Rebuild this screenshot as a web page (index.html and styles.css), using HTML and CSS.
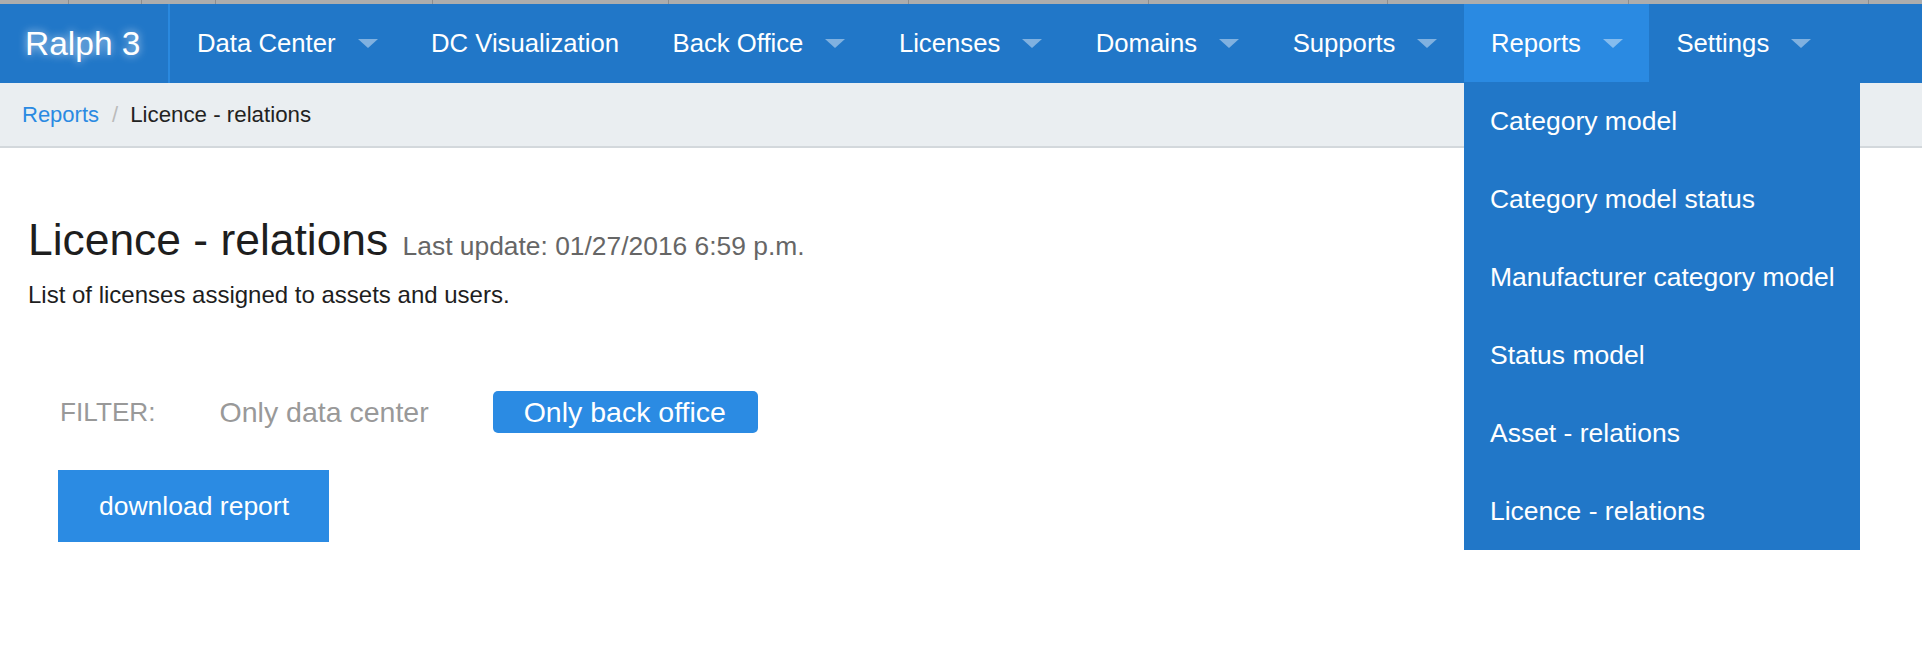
FILE: index.html
```html
<!DOCTYPE html>
<html lang="en">
<head>
<meta charset="utf-8">
<title>Licence - relations</title>
<link rel="stylesheet" href="styles.css">
</head>
<body>
<div class="chrome">
  <span></span><span></span><span></span><span></span><span></span><span></span><span></span><span></span><span></span><span></span><span></span>
</div>
<nav class="topbar">
  <a class="brand" href="#">Ralph 3</a>
  <ul class="menu">
    <li class="item"><a href="#">Data Center</a><i class="caret"></i></li>
    <li class="item"><a href="#">DC Visualization</a></li>
    <li class="item"><a href="#">Back Office</a><i class="caret"></i></li>
    <li class="item"><a href="#">Licenses</a><i class="caret"></i></li>
    <li class="item"><a href="#">Domains</a><i class="caret"></i></li>
    <li class="item"><a href="#">Supports</a><i class="caret"></i></li>
    <li class="item active"><a href="#">Reports</a><i class="caret"></i>
      <ul class="dropdown">
        <li><a href="#">Category model</a></li>
        <li><a href="#">Category model status</a></li>
        <li><a href="#">Manufacturer category model</a></li>
        <li><a href="#">Status model</a></li>
        <li><a href="#">Asset - relations</a></li>
        <li><a href="#">Licence - relations</a></li>
      </ul>
    </li>
    <li class="item"><a href="#">Settings</a><i class="caret"></i></li>
  </ul>
</nav>
<div class="breadcrumbs">
  <a href="#">Reports</a><span class="sep">/</span><span class="current">Licence - relations</span>
</div>
<main class="content">
  <h1 class="title">Licence - relations <small>Last update: 01/27/2016 6:59 p.m.</small></h1>
  <p class="desc">List of licenses assigned to assets and users.</p>
  <div class="filter">
    <span class="filter-label">FILTER:</span>
    <a class="filter-opt" href="#">Only data center</a>
    <a class="filter-opt selected" href="#">Only back office</a>
  </div>
  <a class="download" href="#">download report</a>
</main>
</body>
</html>
```
FILE: styles.css
```css
* { box-sizing: border-box; }
html, body { margin: 0; padding: 0; background: #fff; }
html, body { min-height: 100vh; }
body { font-family: "Liberation Sans", Arial, sans-serif; color: #222; }
a { text-decoration: none; }
ul { list-style: none; margin: 0; padding: 0; }

.chrome {
  display: grid;
  grid-template-columns: 69px 73px 74px 217px 236px 240px 240px 239px 241px 240px 1fr;
  height: 4px;
  background: #adadad;
}
.chrome span { border-right: 1px solid #8e8e8e; }
.chrome span:last-child { border-right: 0; }

.topbar {
  display: flex;
  height: 79px;
  background: #2177c8;
}
.brand {
  display: flex;
  align-items: center;
  padding: 0 25px 0 25px;
  width: 170px;
  border-right: 2px solid #2a89df;
  color: #fff;
  font-size: 33.5px;
  text-shadow: 0 0 8px rgba(255,255,255,0.75);
}
.menu { display: flex; }
.item {
  position: relative;
  display: flex;
  align-items: center;
  padding: 0 26.5px 0 27px;
}
.item > a { color: #fff; font-size: 25.7px; }
.item.active { background: #2a8ae2; height: 78px; }
.caret {
  display: block;
  width: 0;
  height: 0;
  margin-left: 22px;
  border-left: 10px solid transparent;
  border-right: 10px solid transparent;
  border-top: 9px solid rgba(255,255,255,0.43);
}
.dropdown {
  position: absolute;
  top: 78px;
  left: 0;
  width: 396px;
  background: #2177c8;
  z-index: 10;
}
.dropdown li {
  display: flex;
  align-items: center;
  height: 78px;
  padding-left: 26px;
}
.dropdown a { color: #fff; font-size: 26.5px; white-space: nowrap; }

.breadcrumbs {
  display: flex;
  align-items: center;
  height: 65px;
  padding: 0 0 0 22px;
  background: #eaeef1;
  border-bottom: 2px solid #d3d8dc;
  font-size: 22px;
}
.breadcrumbs a { color: #2a8ae2; }
.breadcrumbs .sep { color: #bbb; padding: 0 12px 0 13px; }
.breadcrumbs .current { color: #222; font-size: 22.3px; }

.content { padding: 0 0 0 28px; }
.title {
  margin: 68px 0 0;
  font-size: 44.4px;
  font-weight: normal;
  line-height: 48px;
  color: #1e1e1e;
}
.title small { font-size: 26.4px; color: #666; margin-left: 2px; }
.desc { margin: 10px 0 0; font-size: 24px; line-height: 30px; color: #1e1e1e; }

.filter {
  display: flex;
  align-items: center;
  gap: 64px;
  margin: 81px 0 0 32px;
  height: 42px;
}
.filter-label { font-size: 26.2px; color: #999; }
.filter-opt { font-size: 28.5px; color: #999; }
.filter-opt.selected {
  display: flex;
  align-items: center;
  height: 42px;
  padding: 0 32px 0 31px;
  background: #2b8be3;
  color: #fff;
  border-radius: 5px;
}
.download {
  display: inline-flex;
  align-items: center;
  height: 72px;
  margin: 37px 0 0 30px;
  padding: 0 40px 0 41px;
  background: #2b8be3;
  color: #fff;
  font-size: 26.5px;
}
```
